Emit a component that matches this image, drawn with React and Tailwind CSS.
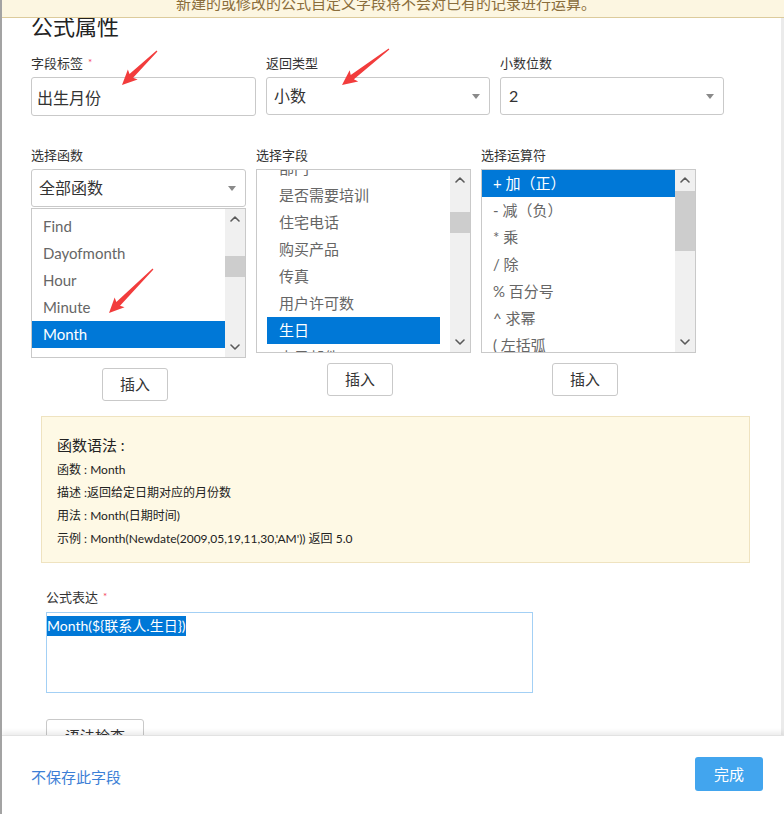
import { useState } from 'react';

const FUNCS = ['Find', 'Dayofmonth', 'Hour', 'Minute', 'Month'];
const FIELDS = ['部门', '是否需要培训', '住宅电话', '购买产品', '传真', '用户许可数', '生日', '电子邮件'];
const OPERATORS = ['+ 加（正）', '- 减（负）', '* 乘', '/ 除', '% 百分号', '^ 求幂', '( 左括弧', ') 右括弧'];

// annotation arrows drawn on top of the screenshot: tail -> tip
const ARROWS = [
  { from: [155, 51], to: [120, 85] },
  { from: [387, 49], to: [340, 85] },
  { from: [151, 269], to: [107, 313] },
];

const Chevron = ({ up }) => (
  <svg width="10" height="6" viewBox="0 0 10 6" fill="none">
    <polyline
      points={up ? '1,5 5,1 9,5' : '1,1 5,5 9,1'}
      stroke="#5a5a5a"
      strokeWidth="1.6"
      strokeLinecap="round"
      strokeLinejoin="round"
    />
  </svg>
);

const Caret = () => (
  <span className="h-0 w-0 border-x-[4px] border-t-[5px] border-x-transparent border-t-[#8a8a8a]" />
);

const Scrollbar = ({ thumbTop, thumbHeight }) => (
  <div className="flex w-[20px] shrink-0 flex-col bg-[#f0f0f0]">
    <div className="flex h-[20px] items-center justify-center">
      <Chevron up />
    </div>
    <div className="flex-1">
      <div className="w-full bg-[#cdcdcd]" style={{ marginTop: thumbTop, height: thumbHeight }} />
    </div>
    <div className="flex h-[20px] items-center justify-center">
      <Chevron />
    </div>
  </div>
);

const ListBox = ({ items, selected, height, offset, inset, textPad, thumbTop, thumbHeight }) => (
  <div className="flex overflow-hidden border border-[#c9c9c9] bg-white" style={{ height }}>
    <div className={`flex-1 overflow-hidden ${inset ? 'px-[10px]' : ''}`}>
      <div style={{ marginTop: offset }}>
        {items.map((it) => (
          <div
            key={it}
            className={`flex h-[27px] items-center whitespace-nowrap text-[15px] leading-none ${
              it === selected ? 'bg-[#0078d7] text-white' : 'text-[#666]'
            }`}
            style={{ paddingLeft: textPad }}
          >
            {it}
          </div>
        ))}
      </div>
    </div>
    <Scrollbar thumbTop={thumbTop} thumbHeight={thumbHeight} />
  </div>
);

const Label = ({ children, required }) => (
  <div className="flex h-[18px] items-center text-[13px] leading-none text-[#333]">
    {children}
    {required && <span className="ml-[5px] -mt-[2px] text-[10px] text-[#f5455b]">*</span>}
  </div>
);

const SelectBox = ({ value, pad = 'pl-[7px]' }) => (
  <div className={`flex h-[38px] items-center justify-between rounded-[3px] border border-[#c9c9c9] bg-white pr-[9px] ${pad}`}>
    <span className="text-[16px] leading-none text-[#333]">{value}</span>
    <Caret />
  </div>
);

const InsertButton = () => (
  <button className="ml-[71px] mt-[10px] flex h-[33px] w-[66px] items-center justify-center rounded-[3px] border border-[#c9c9c9] bg-white text-[15px] leading-none text-[#333]">
    插入
  </button>
);

const Arrows = () => (
  <svg className="pointer-events-none absolute left-0 top-0" width="784" height="814">
    {ARROWS.map(({ from, to }, i) => {
      const dx = to[0] - from[0];
      const dy = to[1] - from[1];
      const L = Math.hypot(dx, dy);
      const ang = (Math.atan2(dy, dx) * 180) / Math.PI;
      const pts = `0,-0.6 ${L - 13},-2.6 ${L - 15},-7 ${L},0 ${L - 15},7 ${L - 13},2.6 0,0.6`;
      return (
        <g key={i} transform={`translate(${from[0]} ${from[1]}) rotate(${ang})`}>
          <polygon points={pts} fill="#f23c3c" />
        </g>
      );
    })}
  </svg>
);

export default function App() {
  const [label, setLabel] = useState('出生月份');

  return (
    <div className="relative flex h-[814px] w-[784px] flex-col overflow-hidden border-l-2 border-[#a3a3a3] bg-white font-[Lato,'Noto_Sans_CJK_SC',sans-serif]">
      {/* notice banner, scrolled so only its lower half shows */}
      <div className="absolute left-0 right-0 top-0 z-10 h-[18px] overflow-hidden border-b border-[#dccb9c] bg-[#fcf6e1]">
        <div className="-mt-[7px] pr-[14px] text-center text-[15px] leading-[20px] text-[#8a6d3b]">
          新建的或修改的公式自定义字段将不会对已有的记录进行运算。
        </div>
      </div>

      {/* scrolling form body */}
      <div className="flex-1 overflow-hidden border-r-[3px] border-[#ebebeb] pl-[29px]">
        <h1 className="mt-[13px] text-[22px] font-normal leading-[28px] text-[#222]">公式属性</h1>

        <div className="mt-[13px] flex gap-[10px]">
          <div className="w-[225px]">
            <Label required>字段标签</Label>
            <input
              value={label}
              onChange={(e) => setLabel(e.target.value)}
              className="mt-[5px] h-[39px] w-full rounded-[3px] border border-[#c9c9c9] pl-[5px] text-[16px] text-[#333] outline-none"
            />
          </div>
          <div className="w-[224px]">
            <Label>返回类型</Label>
            <div className="mt-[5px]">
              <SelectBox value="小数" />
            </div>
          </div>
          <div className="w-[224px]">
            <Label>小数位数</Label>
            <div className="mt-[5px]">
              <SelectBox value="2" pad="pl-[8px]" />
            </div>
          </div>
        </div>

        <div className="mt-[30px] flex items-start gap-[10px]">
          <div className="w-[215px]">
            <Label>选择函数</Label>
            <div className="mt-[5px]">
              <SelectBox value="全部函数" pad="pl-[7px]" />
            </div>
            <div className="mt-px">
              <ListBox
                items={FUNCS}
                selected="Month"
                height={150}
                offset={4}
                textPad={11}
                thumbTop={27}
                thumbHeight={21}
              />
            </div>
            <InsertButton />
          </div>
          <div className="w-[215px]">
            <Label>选择字段</Label>
            <div className="mt-[5px]">
              <ListBox
                items={FIELDS}
                selected="生日"
                height={184}
                offset={-15}
                inset
                textPad={12}
                thumbTop={22}
                thumbHeight={21}
              />
            </div>
            <InsertButton />
          </div>
          <div className="w-[215px]">
            <Label>选择运算符</Label>
            <div className="mt-[5px]">
              <ListBox
                items={OPERATORS}
                selected="+ 加（正）"
                height={184}
                offset={0}
                textPad={11}
                thumbTop={1}
                thumbHeight={60}
              />
            </div>
            <InsertButton />
          </div>
        </div>

        {/* syntax help */}
        <div className="ml-[10px] mt-[15px] h-[147px] w-[709px] border border-[#efe3c0] bg-[#fef9e5] pl-[15px] pt-[18px] text-[#222]">
          <div className="text-[15px] leading-[20px]">函数语法 :</div>
          <div className="mt-[3px] text-[12px] leading-[23px]">
            <div>函数 : Month</div>
            <div>描述 :返回给定日期对应的月份数</div>
            <div>用法 : Month(日期时间)</div>
            <div>示例 : Month(Newdate(2009,05,19,11,30,'AM')) 返回 5.0</div>
          </div>
        </div>

        <div className="ml-[15px] mt-[25px]">
          <Label required>公式表达</Label>
          <div className="mt-[6px] h-[81px] w-[487px] border border-[#a3d0f5] bg-white">
            <span className="inline-block bg-[#0078d7] text-[14px] leading-[20px] text-white">
              {'Month(${联系人.生日})'}
            </span>
          </div>
          <button className="mt-[26px] flex h-[34px] w-[98px] items-center justify-center rounded-[3px] border border-[#c9c9c9] bg-white text-[15px] leading-none text-[#333]">
            语法检查
          </button>
        </div>
      </div>

      {/* footer */}
      <div className="relative z-10 flex h-[79px] shrink-0 items-center justify-between border-t border-[#e2e2e2] bg-white pl-[29px] pr-[21px] shadow-[0_-3px_5px_rgba(0,0,0,0.08)]">
        <a className="mt-[5px] cursor-pointer text-[15px] leading-none text-[#3d7fd6]">不保存此字段</a>
        <button className="-mt-[2px] flex h-[34px] w-[68px] items-center justify-center rounded-[3px] bg-[#42a5ee] text-[15px] leading-none text-white">
          完成
        </button>
      </div>

      <Arrows />
    </div>
  );
}
